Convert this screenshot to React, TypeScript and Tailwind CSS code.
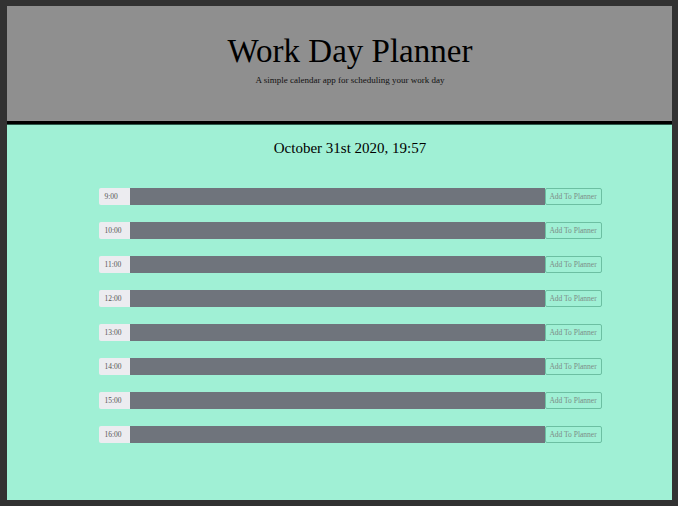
const HOURS = [9, 10, 11, 12, 13, 14, 15, 16]

function HourRow({ hour }: { hour: number }) {
  return (
    <div className="flex h-[17px] w-[503px]">
      <div className="w-[31px] shrink-0 flex items-center pl-[6px] text-[7.5px] text-[#555] bg-[#ececf0] rounded-l-[2px]">
        {hour}:00
      </div>
      <div className="flex-1 bg-[#6f747c]" />
      <button className="w-[57px] shrink-0 border border-[#6cbfa2] rounded-[2px] text-[7.5px] text-[#7c8c86] bg-transparent">
        Add To Planner
      </button>
    </div>
  )
}

export default function App() {
  return (
    <div
      className="w-[678px] h-[506px] bg-[#323232] pt-[6px] pl-[7px] pr-[6px] pb-[6px]"
      style={{ fontFamily: '"Liberation Serif", "Times New Roman", serif' }}
    >
      <div className="h-full flex flex-col bg-[#a0f0d5]">
        <header className="h-[115px] shrink-0 bg-[#8f8f8f] pl-[21px] pt-[25px] flex flex-col items-center">
          <h1 className="text-[33px] leading-[40px] text-black">Work Day Planner</h1>
          <p className="text-[9px] leading-[12px] mt-[3px] text-[#111]">
            A simple calendar app for scheduling your work day
          </p>
        </header>
        <div className="h-[3px] bg-black shrink-0" />
        <div className="h-px bg-[#2c5a4a] shrink-0" />
        <main className="pl-[21px] flex flex-col items-center">
          <p className="mt-[13px] text-[15px] leading-[20px] text-black">October 31st 2020, 19:57</p>
          <div className="mt-[30px] flex flex-col gap-[17px]">
            {HOURS.map((h) => (
              <HourRow key={h} hour={h} />
            ))}
          </div>
        </main>
      </div>
    </div>
  )
}
